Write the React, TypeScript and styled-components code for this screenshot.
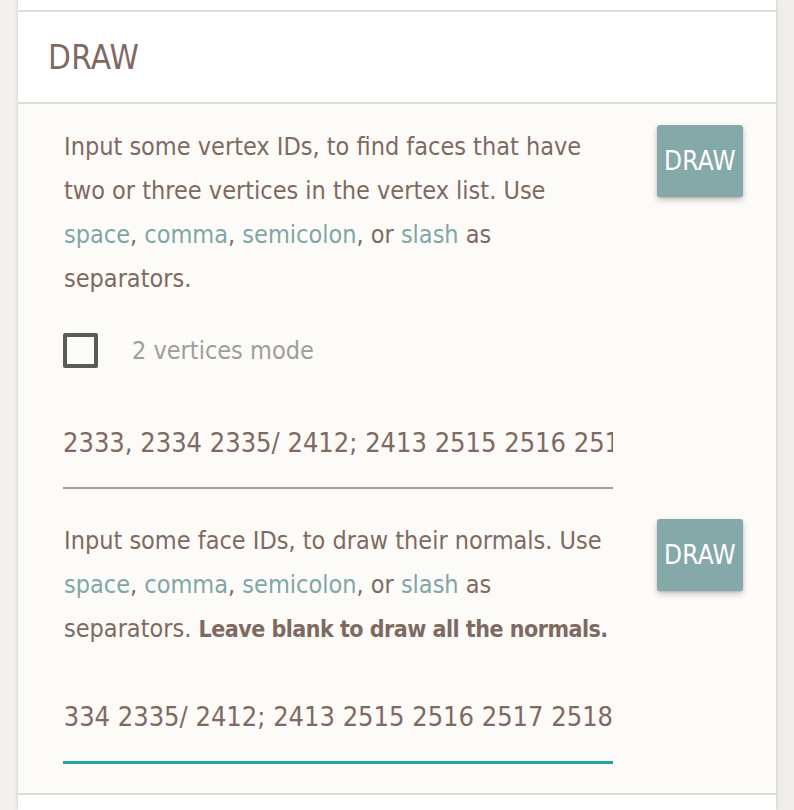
import React, { useState } from 'react';
import styled, { createGlobalStyle } from 'styled-components';

const GlobalStyle = createGlobalStyle`
  html, body {
    margin: 0;
    padding: 0;
    background: #f0efeb;
  }
  body {
    font-family: "DejaVu Sans Condensed", "Liberation Sans Narrow", Roboto, sans-serif;
  }
`;

const Page = styled.div`
  width: 794px;
  height: 810px;
  overflow: hidden;
  padding-left: 18px;
  box-sizing: border-box;
  display: flex;
  background: linear-gradient(90deg, #f2f1ed 0%, #efeeea 100%);
`;

const Panel = styled.div`
  width: 758px;
  display: flex;
  flex-direction: column;
  background: #fff;
  box-shadow: 0 0 4px rgba(0, 0, 0, 0.18);
`;

const PrevItem = styled.div`
  height: 10px;
  flex: none;
  background: #fff;
`;

const Header = styled.div`
  height: 90px;
  flex: none;
  border-top: 2px solid #dddddd;
  display: flex;
  align-items: center;
  padding-left: 30px;
  color: #7f6a62;
  font-size: 33px;
  letter-spacing: 0.3px;
`;

const Body = styled.div`
  flex: none;
  border-top: 2px solid #dddddd;
  background: #fcfbf7;
  padding: 21px 34px 30px 45px;
  display: flex;
  flex-direction: column;
  gap: 30px;
`;

const Section = styled.div`
  display: grid;
  grid-template-columns: 550px 86px;
  column-gap: 44px;
  align-items: start;
`;

const Column = styled.div`
  display: flex;
  flex-direction: column;
`;

const Text = styled.p`
  margin: 0;
  width: 590px;
  color: #7f6a62;
  font-size: 25px;
  line-height: 44px;
  padding-left: 1px;
  white-space: nowrap;

  strong {
    font-size: 23px;
    letter-spacing: -0.5px;
    font-weight: 700;
  }
`;

const Sep = styled.span`
  color: #7fa7a8;
`;

const CheckRow = styled.label`
  display: flex;
  align-items: center;
  gap: 34px;
  margin-top: 31px;
  height: 36px;
  cursor: pointer;
`;

const Box = styled.span<{ $on: boolean }>`
  width: 35px;
  height: 35px;
  box-sizing: border-box;
  border: 4px solid ${(p) => (p.$on ? '#26a69a' : '#5a5a5a')};
  background: ${(p) => (p.$on ? '#26a69a' : 'transparent')};
  border-radius: 2px;
`;

const CheckLabel = styled.span`
  color: #9e9e9e;
  font-size: 25px;
`;

const Field = styled.input<{ $focused?: boolean; $gap: number }>`
  margin-top: ${(p) => p.$gap}px;
  width: 100%;
  height: 70px;
  box-sizing: border-box;
  padding: 0 0 22px;
  border: none;
  border-bottom: ${(p) => (p.$focused ? '2px solid #26a69a' : '2px solid #a09e9c')};
  box-shadow: ${(p) => (p.$focused ? '0 1px 0 0 #26a69a' : 'none')};
  background: transparent;
  outline: none;
  color: #7f6a62;
  font-family: inherit;
  font-size: 27px;
`;

const DrawButton = styled.button`
  width: 86px;
  height: 72px;
  border: none;
  border-radius: 3px;
  background: #85a8a8;
  color: #fff;
  font-family: inherit;
  font-size: 26px;
  letter-spacing: 0.3px;
  box-shadow: 0 3px 6px rgba(0, 0, 0, 0.22), 0 1px 2px rgba(0, 0, 0, 0.12);
  cursor: pointer;
`;

const NextItem = styled.div`
  flex: 1;
  border-top: 2px solid #dddddd;
  background: #fff;
`;

const SepList = () => (
  <>
    <Sep>space</Sep>, <Sep>comma</Sep>, <Sep>semicolon</Sep>, or <Sep>slash</Sep> as
  </>
);

const ids = '2333, 2334 2335/ 2412; 2413 2515 2516 2517 2518';

export default function App() {
  const [twoMode, setTwoMode] = useState(false);
  const faceRef = React.useRef<HTMLInputElement>(null);

  React.useEffect(() => {
    const el = faceRef.current;
    if (el) el.scrollLeft = el.scrollWidth;
  }, []);

  return (
    <>
      <GlobalStyle />
      <Page>
        <Panel>
          <PrevItem />
          <Header>DRAW</Header>
          <Body>
            <Section>
              <Column>
                <Text>
                  Input some vertex IDs, to find faces that have
                  <br />
                  two or three vertices in the vertex list. Use
                  <br />
                  <SepList />
                  <br />
                  separators.
                </Text>
                <CheckRow onClick={() => setTwoMode(!twoMode)}>
                  <Box $on={twoMode} />
                  <CheckLabel>2 vertices mode</CheckLabel>
                </CheckRow>
                <Field $gap={51} defaultValue={ids} readOnly />
              </Column>
              <DrawButton>DRAW</DrawButton>
            </Section>
            <Section>
              <Column>
                <Text>
                  Input some face IDs, to draw their normals. Use
                  <br />
                  <SepList />
                  <br />
                  separators. <strong>Leave blank to draw all the normals.</strong>
                </Text>
                <Field ref={faceRef} $gap={42} $focused defaultValue={ids} readOnly />
              </Column>
              <DrawButton>DRAW</DrawButton>
            </Section>
          </Body>
          <NextItem />
        </Panel>
      </Page>
    </>
  );
}
